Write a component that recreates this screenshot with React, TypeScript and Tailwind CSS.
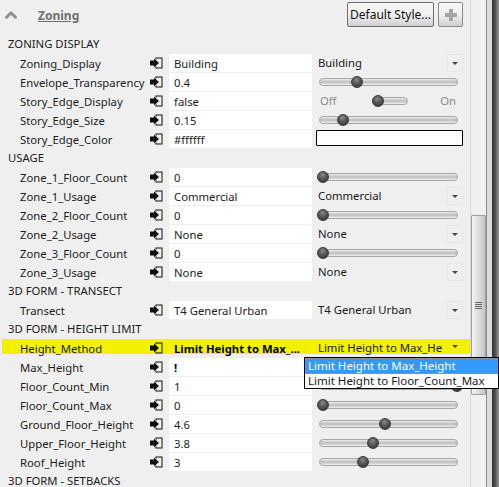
import { ChevronUp } from "lucide-react";

type RowKind =
  | { type: "select"; value: string; label?: string }
  | { type: "slider"; value: string; pos: number }
  | { type: "toggle"; value: string }
  | { type: "color"; value: string };

type Row = { name: string; bold?: boolean; hilite?: boolean; kind: RowKind };

const groups: { title: string; rows: Row[] }[] = [
  {
    title: "ZONING DISPLAY",
    rows: [
      { name: "Zoning_Display", kind: { type: "select", value: "Building" } },
      { name: "Envelope_Transparency", kind: { type: "slider", value: "0.4", pos: 25 } },
      { name: "Story_Edge_Display", kind: { type: "toggle", value: "false" } },
      { name: "Story_Edge_Size", kind: { type: "slider", value: "0.15", pos: 15 } },
      { name: "Story_Edge_Color", kind: { type: "color", value: "#ffffff" } },
    ],
  },
  {
    title: "USAGE",
    rows: [
      { name: "Zone_1_Floor_Count", kind: { type: "slider", value: "0", pos: 0 } },
      { name: "Zone_1_Usage", kind: { type: "select", value: "Commercial" } },
      { name: "Zone_2_Floor_Count", kind: { type: "slider", value: "0", pos: 0 } },
      { name: "Zone_2_Usage", kind: { type: "select", value: "None" } },
      { name: "Zone_3_Floor_Count", kind: { type: "slider", value: "0", pos: 0 } },
      { name: "Zone_3_Usage", kind: { type: "select", value: "None" } },
    ],
  },
  {
    title: "3D FORM - TRANSECT",
    rows: [{ name: "Transect", kind: { type: "select", value: "T4 General Urban" } }],
  },
  {
    title: "3D FORM - HEIGHT LIMIT",
    rows: [
      {
        name: "Height_Method",
        bold: true,
        hilite: true,
        kind: { type: "select", value: "Limit Height to Max_...", label: "Limit Height to Max_He" },
      },
      { name: "Max_Height", bold: true, kind: { type: "slider", value: "!", pos: 100 } },
      { name: "Floor_Count_Min", kind: { type: "slider", value: "1", pos: 100 } },
      { name: "Floor_Count_Max", kind: { type: "slider", value: "0", pos: 0 } },
      { name: "Ground_Floor_Height", kind: { type: "slider", value: "4.6", pos: 46 } },
      { name: "Upper_Floor_Height", kind: { type: "slider", value: "3.8", pos: 37 } },
      { name: "Roof_Height", kind: { type: "slider", value: "3", pos: 30 } },
    ],
  },
  { title: "3D FORM - SETBACKS", rows: [] },
];

function LinkIcon() {
  return (
    <svg width="13" height="12" viewBox="0 0 13 12" className="shrink-0">
      <path d="M5.5 0.5H12.5V11.5H5.5V9.5H6.5V10.5H11.5V1.5H6.5V2.5H5.5Z" fill="#111" />
      <path d="M0 3.5H4V1.5L9 6L4 10.5V8.5H0Z" fill="#111" />
    </svg>
  );
}

function Knob() {
  return (
    <div className="h-[12px] w-[12px] rounded-full border border-[#3a3a3a] bg-[radial-gradient(circle_at_45%_30%,#8a8a8a_0%,#565656_45%,#2e2e2e_100%)]" />
  );
}

function Slider({ pos }: { pos: number }) {
  return (
    <div className="relative mx-[3px] h-[8px] flex-1 rounded-full border border-[#a8a8a8] bg-[linear-gradient(#ececec,#bcbcbc_50%,#f0f0f0)]">
      <div className="absolute top-[-3px]" style={{ left: `${-3 + 1.34 * pos}px` }}>
        <Knob />
      </div>
    </div>
  );
}

function Control({ kind, hilite }: { kind: RowKind; hilite?: boolean }) {
  if (kind.type === "select") {
    return (
      <div className="flex h-[18px] w-full items-center justify-between">
        <span className="whitespace-nowrap pb-[1px] pl-[2px] text-[#1a1a1a]">{kind.label ?? kind.value}</span>
        <div
          className={`flex shrink-0 items-center justify-center border ${
            hilite ? "h-[15px] w-[16px] self-start border-transparent" : "h-[18px] w-[16px] border-[#e6e6e6]"
          }`}
        >
          <div className="h-0 w-0 border-x-[3.5px] border-t-[3.5px] border-x-transparent border-t-[#444]" />
        </div>
      </div>
    );
  }
  if (kind.type === "slider") {
    return (
      <div className="flex h-[18px] w-full items-center pr-[2px]">
        <Slider pos={kind.pos} />
      </div>
    );
  }
  if (kind.type === "toggle") {
    return (
      <div className="flex h-[18px] w-full items-center justify-between pl-[4px] pr-[7px] text-[#8a8a8a]">
        <span>Off</span>
        <div className="relative ml-[3px] h-[8px] w-[36px] rounded-full border border-[#a8a8a8] bg-[linear-gradient(#ececec,#bcbcbc_50%,#f0f0f0)]">
          <div className="absolute left-[-1px] top-[-3px]">
            <Knob />
          </div>
        </div>
        <span>On</span>
      </div>
    );
  }
  return <div className="h-[16px] w-full rounded-[1px] border border-black bg-white" />;
}

export default function App() {
  return (
    <div className="relative flex h-[487px] w-[499px] overflow-hidden bg-[#efefef] font-['Noto_Sans',sans-serif] text-[11.3px] leading-[18px] text-[#1c1c1c]">
      <div className="flex w-[471px] shrink-0 flex-col border-r border-[#dcdcdc]">
        <div className="flex h-[35px] shrink-0 items-start">
          <ChevronUp size={18} strokeWidth={4} className="ml-[2px] mt-[6px] text-[#8f8f8f]" />
          <span className="ml-[18px] mt-[7px] text-[12px] font-bold text-[#6f6f6f] underline">Zoning</span>
          <button className="ml-auto mt-[2px] h-[25px] w-[87px] rounded-[2px] border border-[#6e6e6e] bg-[linear-gradient(#f6f6f6,#f0f0f0_50%,#d0d0d0)] pl-[2px] text-left text-[12px] text-[#111]">
            Default Style...
          </button>
          <div className="ml-[4px] mr-[7px] mt-[2px] flex h-[25px] w-[25px] items-center justify-center rounded-[2px] border border-[#8a8a8a] bg-[linear-gradient(#f6f6f6,#f0f0f0_50%,#d0d0d0)]">
            <div className="relative h-[12px] w-[12px]">
              <div className="absolute left-[4px] top-0 h-[12px] w-[4px] bg-[#a4a4a4]" />
              <div className="absolute left-0 top-[4px] h-[4px] w-[12px] bg-[#a4a4a4]" />
            </div>
          </div>
        </div>
        {groups.map((g) => (
          <div key={g.title} className="flex shrink-0 flex-col">
            <div className="flex h-[19px] items-center pb-[2px] pl-[8px]">{g.title}</div>
            {g.rows.map((r) => (
              <div
                key={r.name}
                className={`ml-[2px] flex h-[19px] items-start ${
                  r.hilite ? "bg-[linear-gradient(#f1f100_15px,transparent_15px)]" : ""
                }`}
              >
                <span className="w-[148px] shrink-0 whitespace-nowrap pl-[18px] pt-[1px]">{r.name}</span>
                <div className="mt-[3px]">
                  <LinkIcon />
                </div>
                <div
                  className={`ml-[6px] h-[18px] w-[143px] shrink-0 whitespace-nowrap pl-[5px] pt-[1px] ${
                    r.hilite ? "" : "bg-white"
                  } ${r.bold ? "font-bold text-black" : ""}`}
                >
                  {r.kind.value}
                </div>
                <div className="ml-[4px] w-[147px] shrink-0">
                  <Control kind={r.kind} hilite={r.hilite} />
                </div>
              </div>
            ))}
          </div>
        ))}
      </div>

      {/* scrollbar */}
      <div className="flex w-[15px] shrink-0 flex-col bg-[#f0f0f0] pt-[215px]">
        <div className="flex h-[180px] w-[15px] items-center justify-center rounded-[1px] border border-[#a0a0a0] bg-[linear-gradient(90deg,#f4f4f4,#d8d8d8_60%,#c4c4c4)]">
          <div className="flex w-[7px] flex-col gap-[1px]">
            <div className="h-[1px] bg-[#666]" />
            <div className="h-[1px] bg-[#666]" />
            <div className="h-[1px] bg-[#666]" />
            <div className="h-[1px] bg-[#666]" />
          </div>
        </div>
      </div>

      {/* window edge */}
      <div className="flex flex-1">
        <div className="w-[1px] bg-[#8a8a8a]" />
        <div className="w-[5px] bg-[#dcdcdc]" />
        <div className="flex-1 bg-[linear-gradient(90deg,#2e2e2e,#555_50%,#9a9a9a)]" />
      </div>

      {/* open dropdown list */}
      <div className="absolute left-[304px] top-[357px] w-[195px] border border-black bg-white text-[11.5px]">
        <div className="h-[16px] whitespace-nowrap border border-dotted border-[#e08a20] bg-[#3399ff] pl-[2px] leading-[13px] text-white">
          Limit Height to Max_Height
        </div>
        <div className="h-[14px] whitespace-nowrap pl-[3px] leading-[14px] text-[#1a1a1a]">Limit Height to Floor_Count_Max</div>
      </div>
    </div>
  );
}
